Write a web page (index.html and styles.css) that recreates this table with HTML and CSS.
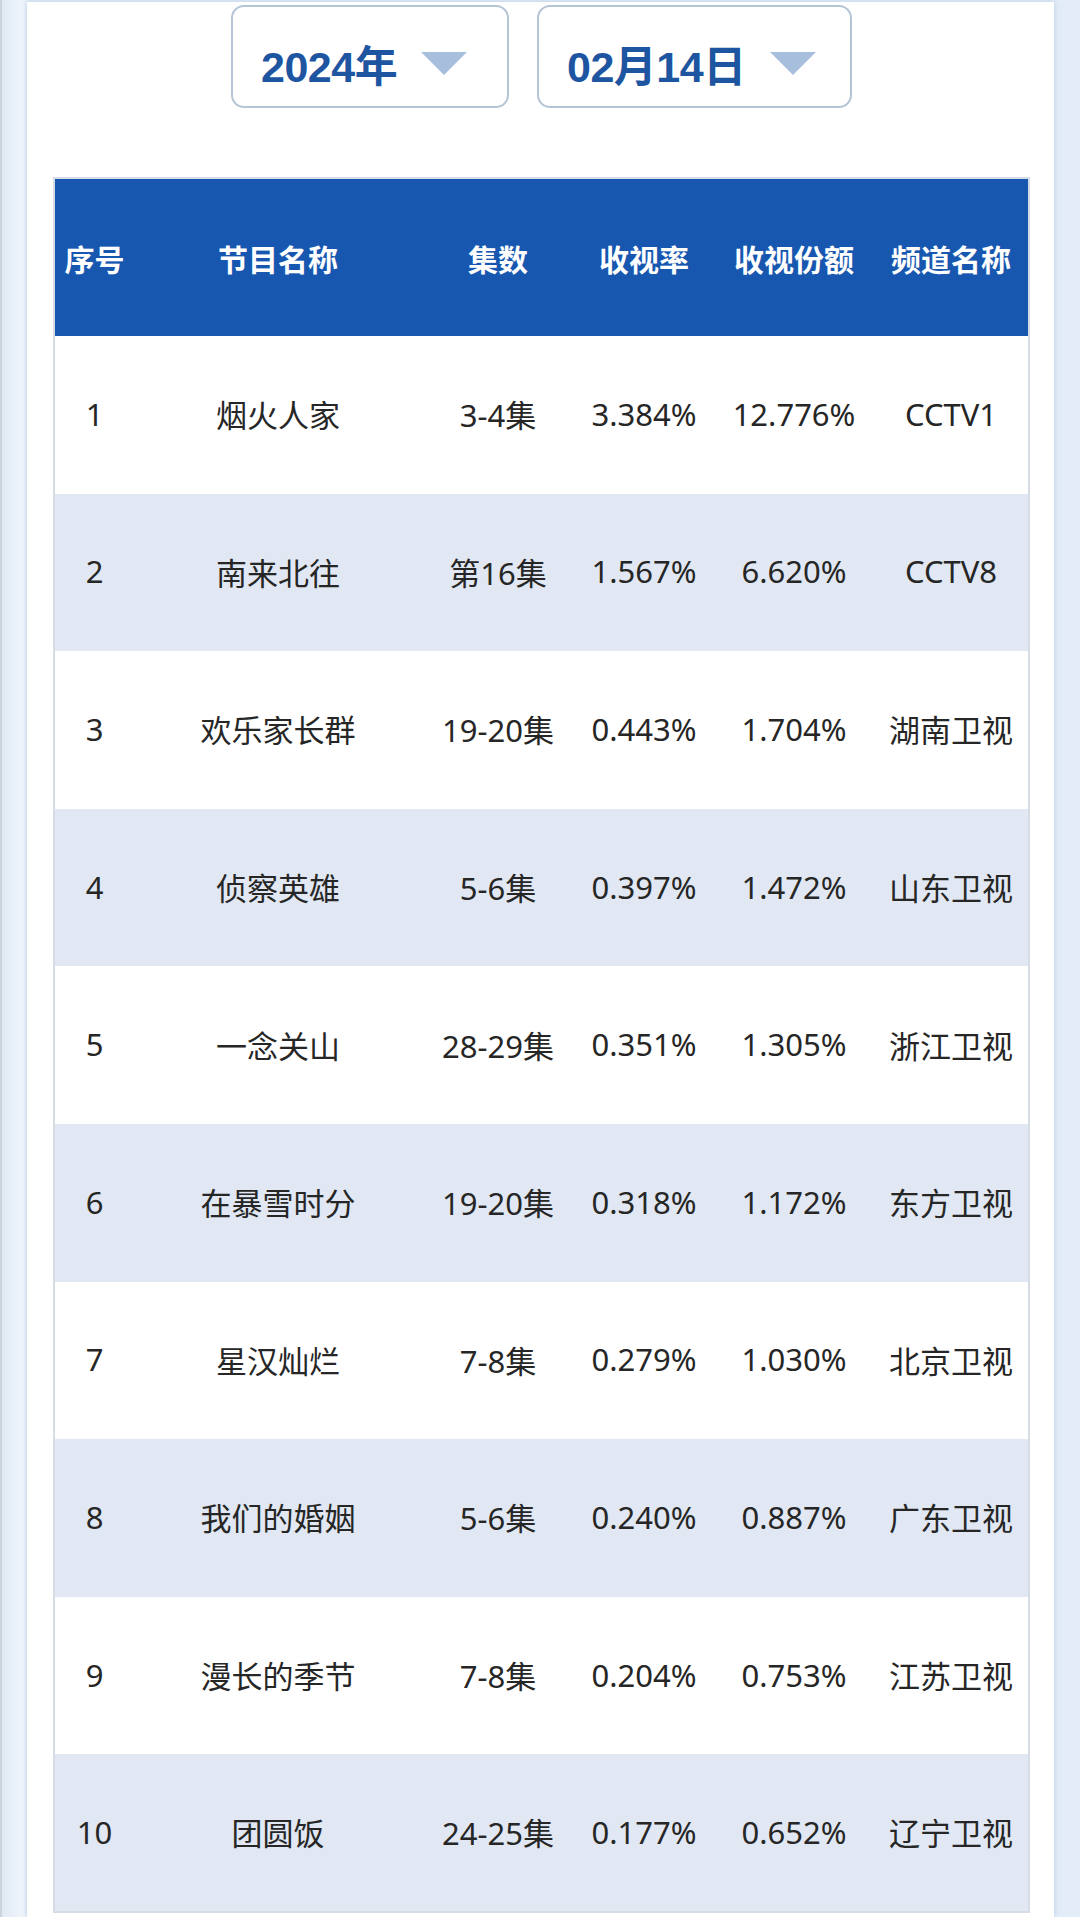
FILE: index.html
```html
<!DOCTYPE html>
<html lang="zh-CN">
<head>
<meta charset="utf-8">
<title>收视率排行</title>
<link rel="stylesheet" href="styles.css">
</head>
<body>
<div class="page">
  <div class="card">
    <div class="pickers">
      <div class="picker picker-year"><span class="picker-label">2024年</span><span class="caret"></span></div>
      <div class="picker picker-date"><span class="picker-label">02月14日</span><span class="caret"></span></div>
    </div>
    <table class="ratings">
      <colgroup>
        <col class="c1"><col class="c2"><col class="c3"><col class="c4"><col class="c5"><col class="c6">
      </colgroup>
      <thead>
        <tr><th>序号</th><th>节目名称</th><th>集数</th><th>收视率</th><th>收视份额</th><th>频道名称</th></tr>
      </thead>
      <tbody>
        <tr><td>1</td><td>烟火人家</td><td>3-4集</td><td>3.384%</td><td>12.776%</td><td>CCTV1</td></tr>
        <tr><td>2</td><td>南来北往</td><td>第16集</td><td>1.567%</td><td>6.620%</td><td>CCTV8</td></tr>
        <tr><td>3</td><td>欢乐家长群</td><td>19-20集</td><td>0.443%</td><td>1.704%</td><td>湖南卫视</td></tr>
        <tr><td>4</td><td>侦察英雄</td><td>5-6集</td><td>0.397%</td><td>1.472%</td><td>山东卫视</td></tr>
        <tr><td>5</td><td>一念关山</td><td>28-29集</td><td>0.351%</td><td>1.305%</td><td>浙江卫视</td></tr>
        <tr><td>6</td><td>在暴雪时分</td><td>19-20集</td><td>0.318%</td><td>1.172%</td><td>东方卫视</td></tr>
        <tr><td>7</td><td>星汉灿烂</td><td>7-8集</td><td>0.279%</td><td>1.030%</td><td>北京卫视</td></tr>
        <tr><td>8</td><td>我们的婚姻</td><td>5-6集</td><td>0.240%</td><td>0.887%</td><td>广东卫视</td></tr>
        <tr><td>9</td><td>漫长的季节</td><td>7-8集</td><td>0.204%</td><td>0.753%</td><td>江苏卫视</td></tr>
        <tr><td>10</td><td>团圆饭</td><td>24-25集</td><td>0.177%</td><td>0.652%</td><td>辽宁卫视</td></tr>
      </tbody>
    </table>
  </div>
</div>
</body>
</html>
```
FILE: styles.css
```css
html, body {
  margin: 0;
  padding: 0;
}
body {
  background: #e3ecf7;
  font-family: "Noto Sans", "Noto Sans CJK SC", sans-serif;
  width: 1080px;
  height: 1917px;
  overflow: hidden;
}
.page {
  height: 1917px;
  border-left: 2px solid #cdd3da;
  box-sizing: border-box;
  padding-top: 2px;
  background: linear-gradient(90deg, #dfe9f5 0, #f2f6fb 22px, #e3ecf7 25px);
}
.card {
  margin: 0 26px 0 25px;
  height: 1915px;
  background: #ffffff;
  box-shadow: 0 0 6px rgba(170, 195, 225, 0.7);
  padding: 3px 25px 0 26px;
  box-sizing: border-box;
}
.pickers {
  display: flex;
  justify-content: center;
  gap: 28px;
  margin-left: 1px;
}
.picker {
  height: 103px;
  box-sizing: border-box;
  border: 2px solid #b6c5d6;
  border-radius: 13px;
  display: flex;
  align-items: center;
  gap: 24px;
  padding: 12px 36px 0 28px;
  background: #fff;
}
.picker-year { width: 278px; }
.picker-date { width: 315px; }
.picker-label {
  font-family: "Liberation Sans", "Noto Sans CJK SC", sans-serif;
  font-weight: 700;
  font-size: 43px;
  color: #1d55a1;
  letter-spacing: -0.5px;
  white-space: nowrap;
}
.caret {
  width: 0;
  height: 0;
  border-left: 23px solid transparent;
  border-right: 23px solid transparent;
  border-top: 23px solid #a7bedd;
  margin-top: 2px;
}
.ratings {
  margin-top: 69px;
  width: 975px;
  table-layout: fixed;
  border-collapse: collapse;
  border: 2px solid #d6dce4;
}
.c1 { width: 80px; }
.c2 { width: 288px; }
.c3 { width: 152px; }
.c4 { width: 140px; }
.c5 { width: 160px; }
.c6 { width: 155px; }
.ratings th {
  background: #1757b0;
  color: #ffffff;
  font-family: "Noto Sans CJK SC", sans-serif;
  font-weight: 700;
  font-size: 30px;
  height: 157px;
  padding: 0;
  text-align: center;
  white-space: nowrap;
}
.ratings td {
  height: 157.6px;
  padding: 0 0 2px 0;
  box-sizing: border-box;
  text-align: center;
  font-size: 31px;
  color: #262626;
  white-space: nowrap;
}
.ratings tbody tr:nth-child(even) td {
  background: #e1e8f3;
}
```
